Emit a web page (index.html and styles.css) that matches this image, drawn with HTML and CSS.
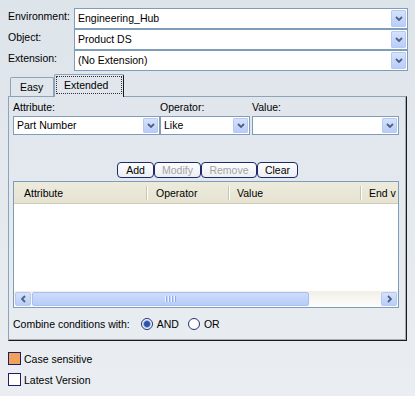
FILE: index.html
```html
<!DOCTYPE html>
<html lang="en">
<head>
  <meta charset="UTF-8">
  <title>Search</title>
  <link rel="stylesheet" href="styles.css">
</head>
<body>

<div class="dialog">
  <!-- Environment / Object / Extension -->
  <div class="fields">
    <div class="field-label">Environment:</div>
    <div class="combo">
      <span class="combo-text">Engineering_Hub</span>
      <span class="combo-btn"><svg width="8" height="5" viewBox="0 0 8 5"><path d="M1 1 L4 4 L7 1" fill="none" stroke="#4d6185" stroke-width="1.8"/></svg></span>
    </div>
    <div class="field-label">Object:</div>
    <div class="combo">
      <span class="combo-text">Product DS</span>
      <span class="combo-btn"><svg width="8" height="5" viewBox="0 0 8 5"><path d="M1 1 L4 4 L7 1" fill="none" stroke="#4d6185" stroke-width="1.8"/></svg></span>
    </div>
    <div class="field-label">Extension:</div>
    <div class="combo">
      <span class="combo-text">(No Extension)</span>
      <span class="combo-btn"><svg width="8" height="5" viewBox="0 0 8 5"><path d="M1 1 L4 4 L7 1" fill="none" stroke="#4d6185" stroke-width="1.8"/></svg></span>
    </div>
  </div>

  <div class="tabs">
    <div class="tab">Easy</div>
    <div class="tab tab-active"><span class="tab-focus">Extended</span></div>
  </div>

  <div class="panel">
    <div class="filter">
      <div class="filter-col col-attr">
        <div class="filter-label">Attribute:</div>
        <div class="combo combo-sm">
          <span class="combo-text">Part Number</span>
          <span class="combo-btn"><svg width="8" height="5" viewBox="0 0 8 5"><path d="M1 1 L4 4 L7 1" fill="none" stroke="#4d6185" stroke-width="1.8"/></svg></span>
        </div>
      </div>
      <div class="filter-col col-op">
        <div class="filter-label">Operator:</div>
        <div class="combo combo-sm">
          <span class="combo-text">Like</span>
          <span class="combo-btn"><svg width="8" height="5" viewBox="0 0 8 5"><path d="M1 1 L4 4 L7 1" fill="none" stroke="#4d6185" stroke-width="1.8"/></svg></span>
        </div>
      </div>
      <div class="filter-col col-val">
        <div class="filter-label">Value:</div>
        <div class="combo combo-sm">
          <span class="combo-text"></span>
          <span class="combo-btn"><svg width="8" height="5" viewBox="0 0 8 5"><path d="M1 1 L4 4 L7 1" fill="none" stroke="#4d6185" stroke-width="1.8"/></svg></span>
        </div>
      </div>
    </div>

    <div class="actions">
      <button class="btn btn-add">Add</button>
      <button class="btn btn-modify" disabled>Modify</button>
      <button class="btn btn-remove" disabled>Remove</button>
      <button class="btn btn-clear">Clear</button>
    </div>

    <div class="grid">
      <div class="grid-head">
        <div class="head-cell cell-attr">Attribute</div>
        <div class="head-sep"></div>
        <div class="head-cell cell-op">Operator</div>
        <div class="head-sep"></div>
        <div class="head-cell cell-val">Value</div>
        <div class="head-sep"></div>
        <div class="head-cell cell-end">End v</div>
      </div>
      <div class="grid-body"></div>
      <div class="hscroll">
        <span class="scroll-btn"><svg width="5" height="8" viewBox="0 0 5 8"><path d="M4 1 L1 4 L4 7" fill="none" stroke="#4d6185" stroke-width="1.8"/></svg></span>
        <span class="scroll-thumb">
          <span class="grip"></span><span class="grip"></span><span class="grip"></span><span class="grip"></span>
        </span>
        <span class="scroll-track"></span>
        <span class="scroll-btn"><svg width="5" height="8" viewBox="0 0 5 8"><path d="M1 1 L4 4 L1 7" fill="none" stroke="#4d6185" stroke-width="1.8"/></svg></span>
      </div>
    </div>

    <div class="combine">
      <span>Combine conditions with:</span>
      <span class="radio radio-on"></span><span class="radio-label">AND</span>
      <span class="radio radio-or"></span><span class="radio-label">OR</span>
    </div>
  </div>

  <div class="options">
    <div class="option"><span class="check check-on"></span><span>Case sensitive</span></div>
    <div class="option"><span class="check"></span><span>Latest Version</span></div>
  </div>
</div>

</body>
</html>
```

FILE: styles.css
```css
html, body {
  margin: 0;
  padding: 0;
}
body {
  width: 415px;
  height: 396px;
  font-family: "Liberation Sans", Arial, sans-serif;
  font-size: 10.5px;
  color: #000;
  background: linear-gradient(to bottom, #dde4ea, #eaeef2);
  overflow: hidden;
}
.dialog {
  padding: 8px 0 0 8px;
}

/* top fields */
.fields {
  display: grid;
  grid-template-columns: 66px 334px;
  grid-auto-rows: 21px;
}
.field-label {
  line-height: 17px;
  white-space: nowrap;
}
.combo {
  display: flex;
  align-items: stretch;
  box-sizing: border-box;
  height: 21px;
  border: 1px solid #7f9db9;
  background: #fff;
}
.combo-text {
  flex: 1;
  padding-left: 3px;
  line-height: 19px;
  white-space: nowrap;
  overflow: hidden;
}
.combo-btn {
  display: flex;
  align-items: center;
  justify-content: center;
  width: 15px;
  margin: 1px;
  box-sizing: border-box;
  border: 1px solid #b7c9f3;
  border-radius: 1px;
  background: linear-gradient(to bottom, #d6e2fc, #b9cdf8);
}
.combo-sm {
  height: 19px;
}
.combo-sm .combo-text {
  line-height: 17px;
}

/* tabs */
.tabs {
  display: flex;
  align-items: flex-end;
  height: 22px;
  margin-top: 3px;
  padding-left: 2px;
}
.tab {
  box-sizing: border-box;
  width: 44px;
  height: 19px;
  padding-left: 9px;
  line-height: 18px;
  border: 1px solid #8ea3b9;
  border-bottom: none;
  border-radius: 2px 2px 0 0;
}
.tab-active {
  position: relative;
  z-index: 1;
  width: 70px;
  height: 23px;
  margin-bottom: -1px;
  padding-left: 0;
  border-right: 1px solid #1a1a1a;
  background: #e0e6ec;
}
.tab-focus {
  display: block;
  box-sizing: border-box;
  width: 66px;
  height: 18px;
  margin: 1px 0 0 1px;
  padding-left: 7px;
  line-height: 17px;
  border: 1px dotted #333;
}

/* panel */
.panel {
  box-sizing: border-box;
  width: 399px;
  height: 245px;
  padding: 3px 4px 0 4px;
  border-top: 1px solid #8ea3b9;
  border-left: 1px solid #8ea3b9;
  border-right: 1px solid #1a1a1a;
  border-bottom: 1px solid #1a1a1a;
  box-shadow: inset -1px -1px 0 #a7adb4;
}
.filter {
  display: flex;
}
.filter-label {
  height: 16px;
  line-height: 15px;
}
.col-attr { width: 147px; }
.col-op { width: 90px; }
.col-val { width: 147px; margin-left: 2px; }

.actions {
  display: flex;
  justify-content: center;
  margin-top: 27px;
}
.btn {
  box-sizing: border-box;
  height: 16px;
  padding: 0;
  font-family: inherit;
  font-size: 10.5px;
  line-height: 14px;
  color: #000;
  border: 1px solid #1d2a6c;
  border-radius: 4px;
  background: linear-gradient(to bottom, #fdfdfe, #eceff3);
}
.btn:disabled {
  color: #a3a3a3;
}
.btn-add { width: 37px; }
.btn-modify { width: 47px; }
.btn-remove { width: 56px; }
.btn-clear { width: 41px; }

/* list */
.grid {
  display: flex;
  flex-direction: column;
  box-sizing: border-box;
  width: 386px;
  height: 127px;
  margin-top: 3px;
  border: 1px solid #7f9db9;
  background: #fff;
  overflow: hidden;
}
.grid-head {
  display: flex;
  align-items: center;
  flex: none;
  height: 21px;
  border-bottom: 1px solid #cfcbb6;
  background: linear-gradient(to bottom, #ecebdd, #e6e3d1);
  white-space: nowrap;
}
.head-cell {
  box-sizing: border-box;
  padding-left: 8px;
}
.cell-attr { width: 132px; padding-left: 10px; }
.cell-op { width: 80px; }
.cell-val { width: 130px; padding-left: 7px; }
.cell-end { padding-left: 7px; }
.head-sep {
  width: 1px;
  height: 14px;
  background: #c7c4b0;
  border-right: 1px solid #fff;
}
.grid-body {
  flex: 1;
}
.hscroll {
  display: flex;
  flex: none;
  height: 16px;
  box-sizing: border-box;
  padding: 1px;
  background: linear-gradient(to bottom, #f1efe8, #fdfdfb);
}
.scroll-btn {
  display: flex;
  align-items: center;
  justify-content: center;
  width: 16px;
  box-sizing: border-box;
  border: 1px solid #b7c9f3;
  border-radius: 2px;
  background: linear-gradient(to bottom, #d6e2fc, #b9cdf8);
}
.scroll-thumb {
  display: flex;
  align-items: center;
  justify-content: center;
  gap: 1px;
  width: 277px;
  margin-left: 1px;
  box-sizing: border-box;
  border: 1px solid #a8bff2;
  border-radius: 2px;
  background: linear-gradient(to bottom, #cddcfc, #b8ccf8);
}
.grip {
  width: 1px;
  height: 6px;
  background: #eef3fe;
  border-right: 1px solid #8eaaf0;
}
.scroll-track {
  flex: 1;
}

.combine {
  display: flex;
  align-items: center;
  height: 16px;
  margin-top: 8px;
  white-space: nowrap;
}
.radio {
  box-sizing: border-box;
  width: 12px;
  height: 12px;
  margin-left: 11px;
  border: 1px solid #1d3377;
  border-radius: 50%;
  background: #fff;
}
.radio-on {
  background: radial-gradient(circle, #2a55ad 0, #2a55ad 2.5px, #9db5e0 3.5px, #fff 4.5px);
}
.radio-or {
  margin-left: 9px;
}
.radio-label {
  margin-left: 4px;
}

/* options */
.options {
  margin-top: 7px;
}
.option {
  display: flex;
  align-items: center;
  height: 21px;
}
.check {
  box-sizing: border-box;
  width: 13px;
  height: 13px;
  margin-right: 3px;
  border: 1px solid #1f1d66;
  background: #fff;
}
.check-on {
  background: #f0a25c;
}
```
